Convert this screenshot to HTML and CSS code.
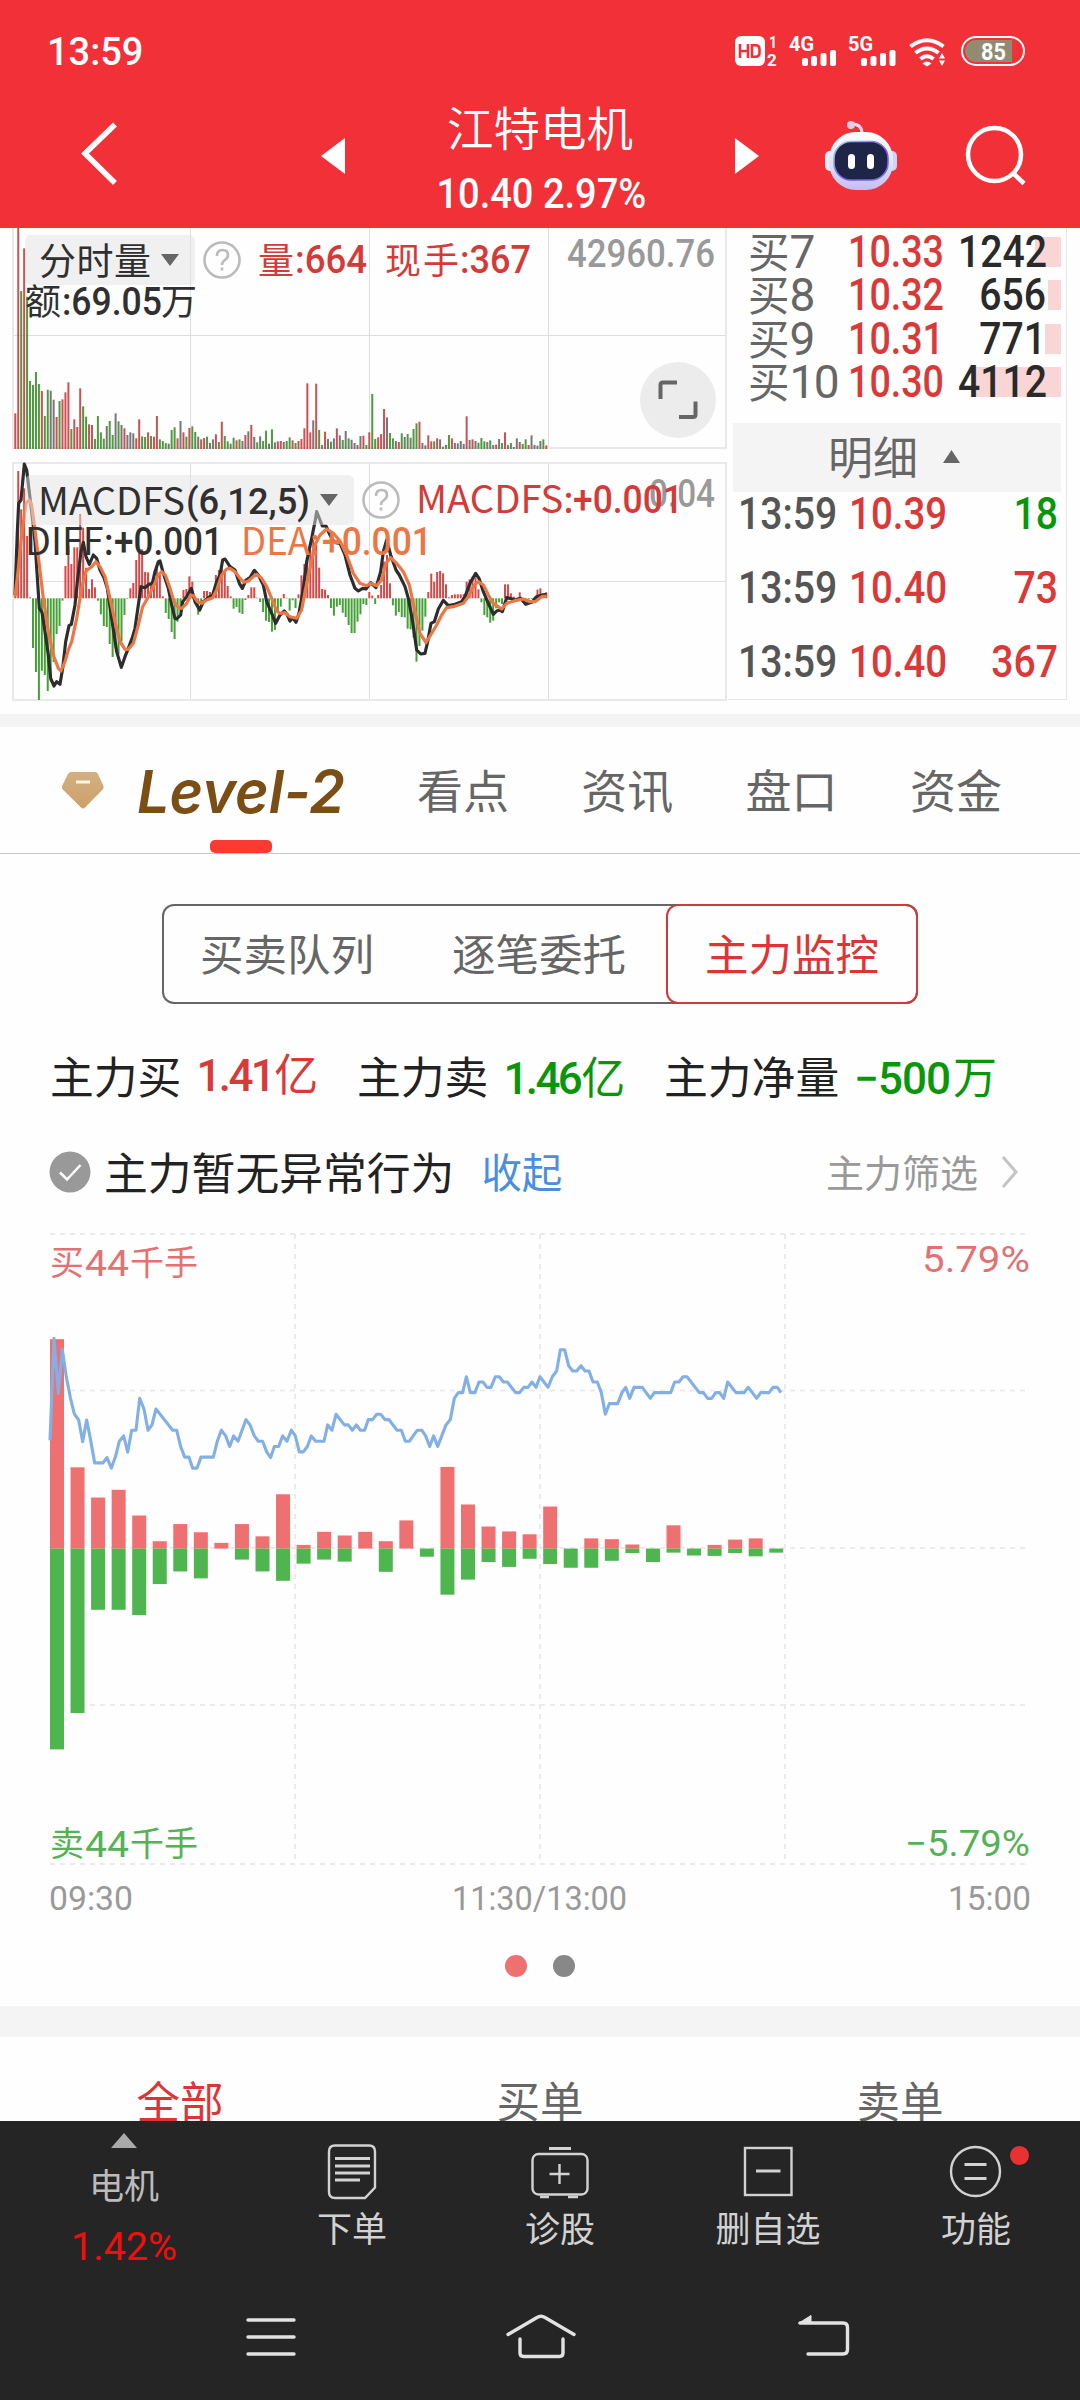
FILE: index.html
```html
<!DOCTYPE html>
<html lang="zh-CN">
<head>
<meta charset="utf-8">
<title>江特电机</title>
<link rel="stylesheet" href="styles.css">
</head>
<body>
<header class="header">
  <div class="status">
    <span class="clock">13:59</span>
    <div class="status-icons">
      <svg width="44" height="34" viewBox="735 34 44 34"><rect x="735" y="36" width="30" height="30" rx="6" fill="#fff"/><g fill="none" stroke="#f23037" stroke-width="2.6"><path d="M740 44v14M748 44v14M740 51h8M752 45.300v11.400h3.500q4 0 4-4v-3.400q0-4-4-4z"/></g><g class="tiny"><text x="769" y="48" font-size="16" textLength="8" lengthAdjust="spacingAndGlyphs">1</text><text x="767" y="66" font-size="17">2</text></g></svg>
      <svg class="net1" width="49" height="34" viewBox="788 34 49 34"><text class="tiny" x="789" y="51" font-size="21" textLength="25" lengthAdjust="spacingAndGlyphs">4G</text><g fill="#fff"><rect x="802" y="58" width="6" height="8" rx="2"/><rect x="811" y="56" width="6" height="10" rx="2"/><rect x="820.500" y="53" width="6" height="13" rx="2"/><rect x="830" y="50" width="6" height="16" rx="2"/></g></svg>
      <svg class="net2" width="49" height="34" viewBox="848 34 49 34"><text class="tiny" x="848" y="51" font-size="21" textLength="25" lengthAdjust="spacingAndGlyphs">5G</text><g fill="#fff"><rect x="861" y="58" width="6" height="8" rx="2"/><rect x="870.500" y="56" width="6" height="10" rx="2"/><rect x="880" y="53" width="6" height="13" rx="2"/><rect x="889.500" y="50" width="6" height="16" rx="2"/></g></svg>
      <svg class="wifi" width="38" height="34" viewBox="908 34 38 34"><g fill="none" stroke="#fff" stroke-width="4"><path d="M910.500 46.500q16.500-12.500 33 0M915.500 53q11.500-9 23 0M920.500 59q6.500-5.500 13 0"/></g><path d="M922.500 63.500q4.500-4 9 0l-4.500 3zM942 53l3 5.500h-6zM942 66l3-5.500h-6z" fill="#fff"/></svg>
      <svg class="battery" width="66" height="34" viewBox="960 34 66 34"><rect x="962" y="37" width="62" height="28" rx="14" fill="none" stroke="#fff" stroke-width="2"/><path d="M1012 40v22h-36a11 11 0 0 1 0-22z" fill="#948a72"/><text class="tiny" x="981" y="59.500" font-size="23" textLength="25" lengthAdjust="spacingAndGlyphs">85</text></svg>
    </div>
  </div>
  <div class="titlebar">
    <svg width="44" height="70" viewBox="76 119 44 70"><path d="M115 124.500L85 153.500l30 29.500" fill="none" stroke="#fff" stroke-width="5.500"/></svg>
    <svg class="prev" width="24" height="36" viewBox="0 0 24 36"><path d="M24 0v36L0 18z" fill="#fff"/></svg>
    <div class="title">
      <div class="name">江特电机</div>
      <div class="quote">10.40 2.97%</div>
    </div>
    <svg class="next" width="24" height="36" viewBox="0 0 24 36"><path d="M0 0v36l24-18z" fill="#fff"/></svg>
    <svg class="robot" width="74" height="74" viewBox="824 118 74 74">
      <defs>
        <linearGradient id="shell" x1="0" y1="0" x2="0" y2="1"><stop offset="0" stop-color="#fff"/><stop offset=".6" stop-color="#dcdff8"/><stop offset="1" stop-color="#c3bdf0"/></linearGradient>
        <linearGradient id="rim" x1="0" y1="0" x2="1" y2="1"><stop offset="0" stop-color="#9fdcea"/><stop offset=".6" stop-color="#7c50e8"/><stop offset="1" stop-color="#6f7bef"/></linearGradient>
      </defs>
      <path d="M852 126q9 0 10 8" fill="none" stroke="#e9dcf5" stroke-width="3"/>
      <circle cx="851" cy="127" r="4" fill="#e6c9e4"/>
      <rect x="825" y="153" width="10" height="20" rx="5" fill="#e9ecfb"/><rect x="887" y="153" width="10" height="20" rx="5" fill="#cfd3f6"/>
      <rect x="829" y="134" width="64" height="58" rx="27" fill="url(#shell)"/>
      <rect x="834" y="143.500" width="54" height="38.500" rx="17" fill="#1f2547" stroke="url(#rim)" stroke-width="1.600"/>
      <rect x="848" y="156" width="7" height="15" rx="3.500" fill="#fff"/><rect x="867" y="156" width="7" height="15" rx="3.500" fill="#fff"/>
    </svg>
    <svg class="search" width="64" height="64" viewBox="963 123 64 64"><circle cx="994.500" cy="154.500" r="26.500" fill="none" stroke="#fff" stroke-width="4.500"/><path d="M1013 173l11 10.500" stroke="#fff" stroke-width="4.500"/></svg>
  </div>
</header>

<section class="market">
  <svg class="intraday" width="728" height="486" viewBox="0 228 728 486">
    <g class="grid"><path d="M190.500 228v221M369.500 228v221M548.500 228v221M13 335.500h714M190.500 463v237M369.500 463v237M548.500 463v237M13 581.500h714"/></g>
    <g class="frame"><path d="M13 228v220h713V228M13 463h713v237H13z"/></g>
    <g id="volume"></g>
    <g id="macd"></g>
    <g transform="translate(0 455) scale(.33333)" class="curve">
      <polyline class="diff" points="45,420 52,230 56,145 63,135 73,27 80,45 95,170 105,260 118,460 126,472 135,530 145,600 152,670 162,693 170,680 180,688 188,640 197,560 207,512 214,508 225,450 232,380 243,290 250,262 258,305 268,328 280,300 290,310 300,345 312,368 322,400 335,490 350,590 364,637 375,605 385,580 397,548 405,520 415,450 423,395 435,398 447,388 457,385 465,350 475,320 480,318 490,355 505,400 515,450 525,490 530,492 542,480 548,440 560,425 574,400 585,440 599,465 610,440 625,428 638,420 650,380 660,360 668,315 675,312 690,335 705,345 718,385 727,400 738,375 750,368 763,346 775,360 790,390 800,440 815,475 827,505 840,480 853,468 862,480 870,498 878,488 888,502 897,475 910,400 920,320 935,250 945,200 950,170 967,213 978,213 990,240 1003,262 1020,265 1035,300 1050,360 1065,400 1075,408 1088,400 1098,402 1112,383 1128,398 1142,350 1150,290 1160,255 1172,300 1188,345 1198,360 1215,395 1225,430 1238,500 1250,585 1262,597 1275,595 1283,560 1293,505 1303,500 1315,462 1330,436 1345,452 1365,448 1385,440 1395,425 1410,385 1427,355 1437,370 1450,410 1465,445 1480,478 1490,468 1500,465 1507,470 1520,428 1530,430 1545,435 1562,430 1577,448 1595,442 1610,425 1625,420 1640,418"/>
      <polyline class="dea" points="45,425 55,340 65,240 78,145 88,135 95,150 105,225 118,330 130,430 145,530 160,600 175,640 183,648 195,620 205,585 215,560 230,490 245,400 258,348 275,335 288,320 300,335 315,365 330,430 345,500 360,560 375,583 385,583 400,565 415,510 428,455 445,425 460,395 475,360 485,350 497,362 510,400 522,440 535,458 545,460 560,445 572,420 580,422 592,440 605,445 620,435 638,428 650,405 665,360 680,342 690,340 705,350 720,370 732,382 745,378 760,365 770,358 785,370 800,395 815,430 830,468 840,475 855,473 870,485 890,490 905,465 915,410 930,340 945,270 960,240 980,222 1000,235 1020,258 1040,300 1060,355 1080,385 1100,392 1112,385 1130,392 1145,375 1158,325 1172,308 1190,325 1210,350 1228,390 1245,470 1260,535 1278,563 1292,540 1310,510 1325,480 1340,458 1360,455 1390,445 1405,425 1420,395 1435,380 1450,390 1465,420 1480,445 1505,462 1520,445 1545,437 1570,432 1590,440 1605,440 1625,425 1640,423"/>
    </g>
    <g class="pill"><rect x="25" y="235" width="170" height="50" rx="6"/><rect x="25" y="475" width="329" height="50" rx="6"/></g>
    <path d="M161 254h18l-9 12zM320 494h18l-9 12z" fill="#666"/>
    <g class="help"><circle cx="222" cy="260" r="17.500"/><circle cx="381" cy="500" r="17.500"/><path d="M217 256q0-6 5.500-6t5.500 5q0 3-3 5t-3 5M222 267.500v3M376 496q0-6 5.500-6t5.500 5q0 3-3 5t-3 5M381 507.500v3"/></g>
    <g class="legend">
      <text x="39" y="275" font-size="37" textLength="112">分时量</text>
      <text x="25" y="315" font-size="36">额</text>
      <text class="m" x="62" y="315" font-size="38" textLength="100" lengthAdjust="spacingAndGlyphs">:69.05</text>
      <text x="161" y="315" font-size="36">万</text>
      <g class="red">
        <text x="258" y="274" font-size="36">量</text>
        <text class="m" x="295" y="273" font-size="38" textLength="72" lengthAdjust="spacingAndGlyphs">:664</text>
        <text x="385" y="274" font-size="36" textLength="74">现手</text>
        <text class="m" x="460" y="273" font-size="38" textLength="71" lengthAdjust="spacingAndGlyphs">:367</text>
      </g>
      <text class="gray m" x="567" y="267" font-size="38" textLength="148" lengthAdjust="spacingAndGlyphs">42960.76</text>
      <text class="gray m" x="649" y="507" font-size="38" textLength="66" lengthAdjust="spacingAndGlyphs">0.04</text>
      <text class="cj" x="38" y="515" font-size="38" textLength="147" lengthAdjust="spacingAndGlyphs">MACDFS</text>
      <text class="m" x="186" y="514" font-size="37" textLength="124" lengthAdjust="spacingAndGlyphs">(6,12,5)</text>
      <text class="cj" x="25" y="555" font-size="38" textLength="89" lengthAdjust="spacingAndGlyphs">DIFF:</text>
      <text class="m" x="114" y="555" font-size="38" textLength="109" lengthAdjust="spacingAndGlyphs">+0.001</text>
      <g class="orange"><text class="cj" x="241" y="555" font-size="38" textLength="79" lengthAdjust="spacingAndGlyphs">DEA:</text>
      <text class="m" x="322" y="555" font-size="38" textLength="110" lengthAdjust="spacingAndGlyphs">+0.001</text></g>
      <g class="red"><text class="cj" x="416" y="513" font-size="38" textLength="158" lengthAdjust="spacingAndGlyphs">MACDFS:</text>
      <text class="m" x="573" y="513" font-size="38" textLength="110" lengthAdjust="spacingAndGlyphs">+0.001</text></g>
    </g>
    <circle cx="678" cy="400" r="38" fill="#ececec"/>
    <path d="M660.500 399v-14q0-2.500 2.500-2.500h14M695.500 401.500v13q0 2.500-2.500 2.500h-14" fill="none" stroke="#666" stroke-width="4"/>
  </svg>
  <div class="book">
    <div class="bids">
      <div class="bid"><span class="lv">买<b>7</b></span><span class="px">10.33</span><span class="qty">1242</span><i style="width:26px"></i></div>
      <div class="bid"><span class="lv">买<b>8</b></span><span class="px">10.32</span><span class="qty">656</span><i style="width:13px"></i></div>
      <div class="bid"><span class="lv">买<b>9</b></span><span class="px">10.31</span><span class="qty">771</span><i style="width:16px"></i></div>
      <div class="bid"><span class="lv">买<b>10</b></span><span class="px">10.30</span><span class="qty">4112</span><i style="width:86px"></i></div>
    </div>
    <div class="detail">明细<svg width="17" height="13" viewBox="0 0 17 13"><path d="M8.500 0L17 13H0z" fill="#666"/></svg></div>
    <div class="trade"><span class="tm">13:59</span><span class="px">10.39</span><span class="vol down">18</span></div>
    <div class="trade"><span class="tm">13:59</span><span class="px">10.40</span><span class="vol">73</span></div>
    <div class="trade"><span class="tm">13:59</span><span class="px">10.40</span><span class="vol">367</span></div>
  </div>
</section>

<div class="band"></div>
<nav class="tabs">
  <div class="tab level2">
    <svg width="50" height="46" viewBox="57 767 50 46"><defs><linearGradient id="gem" x1="0" y1="0" x2="0" y2="1"><stop offset="0" stop-color="#d2b083"/><stop offset="1" stop-color="#cda068"/></linearGradient></defs><path d="M71 771h24q2 0 3 2l5.500 12q.7 2-.8 3.600L85 806.500q-2 2-4 0L62.800 788.600q-1.500-1.600-.8-3.600L68 773q1-2 3-2z" fill="url(#gem)"/><path d="M76 781h14" stroke="#fff6e4" stroke-width="3"/></svg>
    <svg class="logo" width="212" height="54" viewBox="136 762 212 54"><text x="137" y="811" font-size="59" textLength="208" lengthAdjust="spacingAndGlyphs">Level-2</text></svg>
  </div>
  <div class="tab">看点</div><div class="tab">资讯</div><div class="tab">盘口</div><div class="tab">资金</div>
</nav>

<div class="segment"><div>买卖队列</div><div>逐笔委托</div><div class="on">主力监控</div></div>

<div class="stats">
  <div>主力买<span class="v red"><b>1.41</b>亿</span></div>
  <div>主力卖<span class="v green"><b>1.46</b>亿</span></div>
  <div>主力净量<span class="v green"><b class="net">−500</b>万</span></div>
</div>

<div class="notice">
  <svg width="42" height="42" viewBox="0 0 42 42"><circle cx="21" cy="21" r="20.500" fill="#999"/><path d="M11 21.500l7 7 13.500-14.500" fill="none" stroke="#fff" stroke-width="2.500"/></svg>
  <span class="msg">主力暂无异常行为</span><a class="fold">收起</a>
  <span class="filter">主力筛选</span>
  <svg class="arrow" width="20" height="34" viewBox="0 0 20 34"><path d="M3 2l13 15L3 32" fill="none" stroke="#c4c4c4" stroke-width="3"/></svg>
</div>

<svg class="flow" width="1080" height="700" viewBox="0 1220 1080 700">
  <g class="dash"><path d="M50 1234h976M50 1390.500h976M50 1548h976M50 1705h976M50 1864h976"/><path d="M295 1234v630M540 1234v630M785 1234v630"/></g>
  <g id="bars" transform="translate(30 1220) scale(.33333 .40816)"></g>
  <polyline transform="translate(30 1220) scale(.33333 .40816)" class="price" points="60,540 72,290 85,425 97,317 109,385 121,435 133,475 146,490 158,543 170,490 182,540 194,595 219,595 231,582 244,608 257,578 268,542 281,529 293,569 305,515 318,515 329,437 342,463 354,515 366,502 378,463 403,489 428,515 440,515 452,555 464,581 477,581 488,608 501,608 513,581 550,581 562,542 574,515 587,529 599,555 611,529 624,542 648,489 660,502 673,529 685,542 698,542 710,568 722,582 733,555 746,555 758,529 771,542 784,515 796,529 808,568 820,568 832,555 844,529 857,542 882,542 893,502 906,515 918,476 943,502 955,502 967,515 979,502 991,515 1004,515 1015,489 1028,489 1040,476 1052,476 1065,489 1077,489 1101,515 1114,515 1126,542 1138,542 1162,515 1175,515 1187,529 1199,555 1211,529 1223,555 1248,502 1261,489 1273,437 1285,423 1298,423 1309,384 1321,423 1335,423 1347,397 1359,397 1371,410 1383,410 1396,384 1408,384 1420,397 1432,397 1457,423 1469,423 1481,410 1494,410 1506,397 1518,410 1530,384 1554,410 1567,384 1580,370 1591,318 1604,318 1616,357 1628,370 1640,370 1653,357 1665,370 1677,370 1689,397 1702,397 1714,423 1726,476 1738,450 1763,450 1776,423 1787,410 1799,437 1812,410 1837,410 1861,437 1873,423 1922,423 1934,397 1947,397 1959,384 1971,384 2008,423 2020,423 2033,437 2045,437 2057,423 2069,423 2081,437 2093,397 2118,423 2142,423 2155,410 2180,437 2192,423 2217,423 2229,410 2242,410 2253,423"/>
  <g class="buy"><text x="50" y="1275" font-size="34">买</text><text x="85" y="1276" font-size="36" textLength="44" lengthAdjust="spacingAndGlyphs">44</text><text x="130" y="1275" font-size="34" textLength="68">千手</text><text x="922" y="1272" font-size="36" textLength="108" lengthAdjust="spacingAndGlyphs">5.79%</text></g>
  <g class="sell"><text x="50" y="1856" font-size="34">卖</text><text x="85" y="1857" font-size="36" textLength="44" lengthAdjust="spacingAndGlyphs">44</text><text x="130" y="1856" font-size="34" textLength="68">千手</text><text x="905" y="1856" font-size="36" textLength="125" lengthAdjust="spacingAndGlyphs">−5.79%</text></g>
  <g class="axis"><text x="49" y="1909.500" textLength="84" lengthAdjust="spacingAndGlyphs">09:30</text><text x="452" y="1909.500" textLength="175" lengthAdjust="spacingAndGlyphs">11:30/13:00</text><text x="948" y="1909.500" textLength="83" lengthAdjust="spacingAndGlyphs">15:00</text></g>
</svg>
<div class="dots"><i class="active"></i><i></i></div>
<div class="band tall"></div>
<div class="orders"><div class="on">全部</div><div>买单</div><div>卖单</div></div>

<footer class="footer">
  <div class="tools">
    <div class="sector"><svg width="26" height="15" viewBox="0 0 26 15"><path d="M13 0l13 15H0z" fill="#aaa"/></svg><span>电机</span><b>1.42%</b></div>
    <div class="tool"><svg width="60" height="60" viewBox="322 2142 60 60"><path d="M335 2145.500h34q6 0 6 6v36l-10 10.500h-30q-6 0-6-6v-40.500q0-6 6-6z"/><path d="M335 2158.500h35M335 2166h35M335 2173h35M335 2180h25" stroke-width="3"/></svg><span>下单</span></div>
    <div class="tool"><svg width="60" height="60" viewBox="530 2142 60 60"><path d="M549 2148.500h22" stroke-width="3"/><rect x="532.500" y="2154" width="55" height="40.500" rx="6"/><path d="M549.500 2174h20M559.500 2164v20M540 2197h9M568 2197h10"/></svg><span>诊股</span></div>
    <div class="tool"><svg width="60" height="60" viewBox="737 2142 60 60"><rect x="744" y="2148" width="46.500" height="47"/><path d="M755 2171h24.500" stroke-width="3"/></svg><span>删自选</span></div>
    <div class="tool"><svg width="60" height="60" viewBox="946 2142 60 60"><circle cx="975.500" cy="2171.500" r="24.500"/><path d="M964.500 2164.500h22M964.500 2178.500h22" stroke-width="3"/></svg><i class="badge"></i><span>功能</span></div>
  </div>
  <div class="sysnav">
    <svg width="54" height="50" viewBox="244 2312 54 50"><path d="M248 2320h46M248 2337h46M248 2354h46"/></svg>
    <svg class="home" width="74" height="50" viewBox="504 2312 74 50"><path d="M508 2334.500l29-17q4-2.500 8 0l29 17M520 2339v14q0 3.500 3.500 3.500h36q3.500 0 3.500-3.500v-14"/></svg>
    <svg class="back" width="56" height="50" viewBox="796 2312 56 50"><path d="M800 2323h43q4.500 0 4.500 4.500v22q0 4.500-4.500 4.500h-35"/><path d="M799 2323l12-7.500v7.500z" fill="#e2e2e2" stroke-width="1"/></svg>
  </div>
</footer>
<script src="charts.js"></script>
</body>
</html>
```
FILE: styles.css
```css
* { box-sizing: border-box; }
body { margin: 0; width: 1080px; height: 2400px; overflow: hidden; background: #fefefe; font-family: Roboto, "Noto Sans CJK SC", sans-serif; color: #222; }
svg { display: block; flex: none; overflow: visible; }
b { font-weight: 500; }
i { display: block; }

.header { height: 228px; background: #f23037; color: #fff; }
.status { height: 104px; padding: 0 54px 0 47px; display: flex; align-items: center; justify-content: space-between; }
.clock { font-size: 38px; font-weight: 500; }
.status-icons { display: flex; align-items: center; padding-bottom: 2px; }
.tiny { fill: #fff; font-weight: 700; }
.net1 { margin-left: 9px; }
.net2 { margin-left: 11px; }
.wifi { margin-left: 11px; }
.battery { margin-left: 14px; }
.titlebar { height: 124px; padding-left: 76px; display: flex; align-items: flex-start; }
.titlebar > svg { margin-top: 15px; }
.titlebar .prev { margin: 34px 0 0 201px; }
.title { width: 390px; text-align: center; }
.name { height: 62px; line-height: 52px; font-size: 46.5px; font-weight: 350; }
.quote { line-height: 56px; padding-left: 3px; font-size: 42px; font-weight: 500; transform: scaleX(.905); }
.titlebar .next { margin-top: 34px; }
.titlebar .robot { margin: 12px 0 0 65px; }
.titlebar .search { margin: 19px 0 0 65px; }

.market { height: 486px; display: flex; }
.intraday { overflow: hidden; }
.grid path { fill: none; stroke: #dedede; stroke-width: 1; }
.frame path { fill: none; stroke: #e9e9e9; stroke-width: 2; }
.curve polyline { fill: none; stroke-width: 9.5; stroke-linejoin: round; }
.curve .diff { stroke: #2d2d2d; }
.curve .dea { stroke: #ec7644; }
.pill rect { fill: rgba(226, 226, 226, .5); }
.help { fill: none; stroke: #bbb; stroke-width: 2.6; }
.legend { fill: #303030; font-weight: 400; }
.legend .m { font-weight: 500; }
.legend .cj { font-family: "Noto Sans CJK SC", sans-serif; }
.legend .red { fill: #d43a38; }
.legend .gray { fill: #999; }
.legend .orange { fill: #ec7644; }

.book { width: 339px; height: 472px; padding: 2px 5px 0 5px; border-right: 1px solid #e6e6e6; border-bottom: 1px solid #e6e6e6; }
.bid { height: 43.3px; line-height: 45px; display: grid; grid-template-columns: 100px 100px 1fr; padding: 0 15px 0 15px; position: relative; font-size: 43.5px; }
.bid i { position: absolute; right: 0; top: 7px; height: 30px; background: #f9d5d5; z-index: -1; }
.lv { color: #666; font-size: 41.5px; white-space: nowrap; }
.lv b { font-size: 46px; font-weight: 400; letter-spacing: -1.6px; }
.px, .qty, .tm, .vol { font-weight: 500; transform: scaleX(.9); transform-origin: left; white-space: nowrap; }
.px { color: #d93a39; transform: scaleX(.865); }
.qty, .vol { text-align: right; transform-origin: right; }
.qty { color: #2a2a2a; }
.detail { height: 69px; margin-top: 20px; background: #f4f4f4; color: #666; font-size: 45px; line-height: 68px; display: flex; align-items: center; padding: 4px 0 0 95px; gap: 25px; }
.detail svg { margin-bottom: 6px; }
.trade { height: 74px; line-height: 45px; padding: 0 3px 0 5px; display: grid; grid-template-columns: 111px 110px 1fr; font-size: 43.5px; }
.trade .px { transform: scaleX(.885); }
.tm { color: #555; }
.vol { color: #d93a39; }
.vol.down { color: #0a960a; }

.band { height: 13px; background: #f4f4f4; }
.band.tall { height: 31px; }
.tabs { height: 127px; border-bottom: 1px solid #c6c6c6; display: flex; color: #666; font-size: 46px; line-height: 131px; }
.tab { width: 164.3px; }
.tab.level2 { width: 417px; padding: 1px 0 0 57px; display: flex; align-items: center; gap: 29px; position: relative; }
.tab.level2::after { content: ""; position: absolute; left: 210px; bottom: 0; width: 62px; height: 13px; border-radius: 5px; background: #fc3a32; }
.logo text { fill: #7a4e14; font-family: Inter, sans-serif; font-weight: 600; font-style: italic; }

.segment { width: 756px; height: 100px; margin: 50px 0 0 162px; border-radius: 12px; box-shadow: inset 0 0 0 2px #666; display: grid; grid-template: 100px / 252px 252px 252px; line-height: 106px; text-align: center; font-size: 43.5px; color: #666; }
.segment div { height: 100px; padding-right: 2px; }
.segment .on { color: #dd3535; box-shadow: inset 0 0 0 2px #d2393b; border-radius: 12px; padding: 0; }

.stats { height: 146px; padding: 0 0 5px 50px; display: grid; grid-template-columns: 307px 307px 1fr; align-items: center; font-size: 43.8px; white-space: nowrap; }
.v { margin-left: 15px; font-size: 44px; position: relative; }
.v b { letter-spacing: -2.6px; margin-right: 1px; }
.v b.net { letter-spacing: -1px; margin-right: 3px; }
.green { color: #0a960a; }
.stats .green { top: 0; }
.stats .red { top: -3px; color: #d93a39; }

.notice { height: 44px; padding: 0 60px 0 49px; display: flex; align-items: center; font-size: 43.8px; line-height: 44px; white-space: nowrap; }
.msg { margin-left: 13px; padding-top: 5px; }
.fold { margin-left: 27px; padding-top: 4px; font-size: 40.5px; color: #4a8ee0; }
.filter { margin-left: auto; margin-right: 22px; padding-top: 3px; font-size: 38px; color: #999; }

.flow { margin-top: 26px; }
.dash { fill: none; stroke: #ebebeb; stroke-width: 2; stroke-dasharray: 5 5; }
.price { fill: none; stroke: #82b0e6; stroke-width: 3.1; stroke-linejoin: round; vector-effect: non-scaling-stroke; }
.flow text { font-weight: 400; }
.buy { fill: #e27272; }
.sell { fill: #55b155; }
.axis { fill: #999; font-size: 33px; }
.dots { height: 86px; padding: 6px 0 0; display: flex; justify-content: center; align-items: center; gap: 26px; }
.dots i { width: 22px; height: 22px; border-radius: 50%; background: #888; }
.dots .active { background: #ef7070; }

.orders { height: 84px; overflow: hidden; display: grid; grid-template-columns: repeat(3, 1fr); text-align: center; font-size: 43.5px; line-height: 134px; color: #666; }
.orders .on { color: #dd3535; }

.footer { height: 279px; background: #252525; }
.tools { height: 154px; display: grid; grid-template-columns: 248px repeat(4, 208px); color: #d2d2d2; font-size: 35px; }
.sector { display: flex; flex-direction: column; align-items: center; padding-top: 12px; }
.sector span { height: 66px; line-height: 79px; color: #bbb; }
.sector b { font-size: 39.5px; line-height: 66px; font-weight: 400; color: #f40d0d; }
.tool { display: flex; flex-direction: column; align-items: center; padding-top: 21px; position: relative; }
.tool span { line-height: 58px; }
.tool svg { fill: none; stroke: #d2d2d2; stroke-width: 2.4; }
.badge { position: absolute; left: 138px; top: 25px; width: 19px; height: 19px; border-radius: 50%; background: #ea3131; }
.sysnav { height: 125px; padding: 37px 0 0 244px; display: flex; align-items: flex-start; }
.sysnav .home { margin-left: 206px; }
.sysnav .back { margin-left: 218px; }
.sysnav svg { fill: none; stroke: #e2e2e2; stroke-width: 3.4; stroke-linecap: round; stroke-linejoin: round; }
```
FILE: charts.js
```js
const NS = 'http://www.w3.org/2000/svg';
const COLORS = { r: '#cb5152', g: '#4f9940', k: '#777' };

// One entry per minute: a colour letter followed by the bar's end, in thirds of a pixel.
const VOLUME = 'r565 r0 g198 r70 g215 g468 g480 g441 g477 r498 g573 g494 k497 k524 r576 g528 r523 r502 r472 g612 r583 r606 r490 g544 g575 r598 r600 g642 g573 g622 g641 k603 g588 g630 k565 g589 k600 r610 k630 k622 k625 r640 r583 g634 g636 r622 g633 r635 r573 g643 g648 g654 k656 g615 g607 r640 k588 r622 g635 r609 g604 g621 k635 r643 r639 g635 k654 k643 r628 g651 r590 g633 g649 k656 g638 r646 g643 k648 r630 k619 r600 k636 g652 k634 g648 g617 k656 g613 k652 r649 r648 k651 g648 g637 r646 g654 r648 r642 r610 r475 r622 k586 r476 g615 k660 r620 k642 g650 k640 r610 k631 g645 k618 g640 k644 k654 r660 k633 r632 g660 r622 g507 g642 r637 r627 r552 k577 g624 g640 k648 r651 g625 k636 g627 k638 g612 g595 r590 k654 k661 r631 r649 g649 r640 k643 k665 g660 g630 r640 k654 k655 k648 k657 r574 k645 r643 k648 g653 g639 g649 k651 g646 k660 r659 k642 g654 r622 k660 g654 k666 k640 r651 g657 g643 r660 k631 k660 k662 k648 g643 r661';
const MACD = '395 48 163 100 243 427 579 651 735 647 660 708 680 621 537 513 437 333 272 327 277 277 177 218 338 402 373 397 437 478 513 516 567 606 580 598 560 480 432 400 384 315 293 283 351 352 387 370 330 360 424 474 492 531 552 500 470 405 402 364 380 445 479 450 408 408 411 410 360 345 340 350 393 424 461 456 473 477 435 420 397 397 428 441 471 497 501 530 525 470 455 417 428 467 436 459 418 361 327 310 285 255 270 338 402 404 420 459 482 455 450 473 486 510 534 534 500 478 447 450 411 422 447 420 390 320 300 385 451 482 471 486 487 521 523 548 620 573 527 485 411 356 380 351 348 355 388 427 420 418 418 418 418 380 373 365 367 403 442 480 487 503 497 460 442 447 388 388 415 425 428 412 433 440 434 432 428 404 400 418 412';
// Main-force buy / sell totals, as the upper and lower end of every bar.
const BUY = '292 606 680 661 724 787 745 765 791 745 775 672 796 764 773 764 787 736 805 605 697 751 763 770 702 805 780 782 795 805 748 805 796 783 780 805';
const SELL = '1297 1208 955 955 968 892 861 878 805 832 861 884 842 832 837 805 862 805 825 918 881 838 850 830 843 852 852 835 816 838 815 822 823 816 824 815';

function bar(parent, x, y, width, height, fill) {
  const rect = document.createElementNS(NS, 'rect');
  Object.entries({ x, y, width, height, fill }).forEach(([k, v]) => rect.setAttribute(k, v));
  parent.appendChild(rect);
}

const minuteX = i => 14.3 + i * 2.95;

const volume = document.getElementById('volume');
VOLUME.split(' ').forEach((d, i) => {
  const top = 225 + Number(d.slice(1)) / 3;
  bar(volume, minuteX(i), top, 2, 449 - top, COLORS[d[0]]);
});

const macd = document.getElementById('macd');
MACD.split(' ').map(Number).forEach((v, i) => {
  const end = 455 + v / 3, zero = 598.3;
  bar(macd, minuteX(i), Math.min(end, zero), 2, Math.abs(end - zero), v < 430 ? '#d84846' : '#45a035');
});

const bars = document.getElementById('bars');
const sell = SELL.split(' ').map(Number);
BUY.split(' ').map(Number).forEach((b, i) => {
  const x = 60 + i * 61.65;
  bar(bars, x, b, 42, 805 - b, '#ef7070');
  bar(bars, x, 805, 42, sell[i] - 805, '#4fb64f');
});
```
